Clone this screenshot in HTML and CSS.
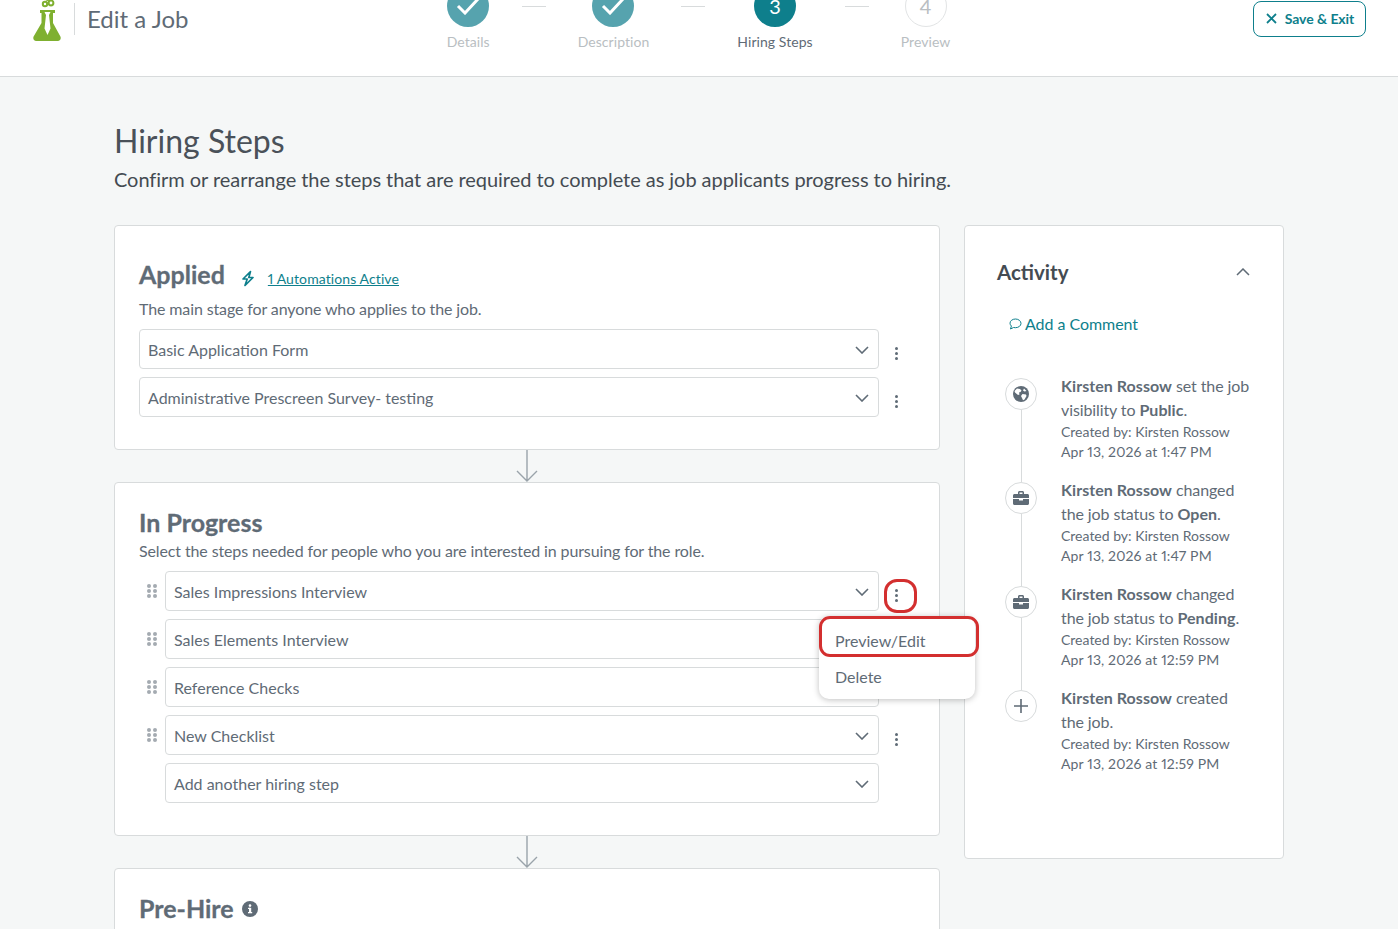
FILE: index.html
```html
<!DOCTYPE html>
<html lang="en">
<head>
<meta charset="UTF-8">
<title>Edit a Job</title>
<link rel="stylesheet" href="styles.css">
</head>
<body>
<div class="page">

<!-- Top bar -->
<header class="topbar">
    <div class="brand">
        <svg class="logo" width="28" height="62" viewBox="0 0 28 62">
            <circle cx="12" cy="24" r="2.2" fill="none" stroke="#7fb030" stroke-width="2"/>
            <circle cx="18" cy="23" r="2.4" fill="none" stroke="#7fb030" stroke-width="2"/>
            <circle cx="15" cy="18" r="2" fill="none" stroke="#7fb030" stroke-width="2"/>
            <path fill="#7fb030" d="M7 30h15v3h-2v10l7.400 13.500c.9 2-.2 4.500-2.600 4.500H3.200C.8 61-.3 58.500.6 56.500L8.500 43V33H7z"/>
            <path fill="#fff" d="M11.500 32h6l-1.500 3 1.500 13.500L14.500 55l-3-6.500L13 35z"/>
        </svg>
        <span class="brand-sep"></span>
        <span class="brand-title">Edit a Job</span>
    </div>
    <nav class="steps">
        <div class="step done">
            <span class="dot"><svg width="24" height="18" viewBox="0 0 24 18"><path d="M2 9l7 7L22 2" fill="none" stroke="#fff" stroke-width="3"/></svg></span>
            <span class="step-label">Details</span>
        </div>
        <span class="step-line"></span>
        <div class="step done">
            <span class="dot"><svg width="24" height="18" viewBox="0 0 24 18"><path d="M2 9l7 7L22 2" fill="none" stroke="#fff" stroke-width="3"/></svg></span>
            <span class="step-label">Description</span>
        </div>
        <span class="step-line"></span>
        <div class="step current">
            <span class="dot">3</span>
            <span class="step-label">Hiring Steps</span>
        </div>
        <span class="step-line"></span>
        <div class="step todo">
            <span class="dot">4</span>
            <span class="step-label">Preview</span>
        </div>
    </nav>
    <div class="topbar-right">
        <button class="save-btn" type="button">
            <svg width="11" height="11" viewBox="0 0 11 11"><path d="M1 1l9 9M10 1l-9 9" stroke="#0e7f8c" stroke-width="1.800" fill="none"/></svg>
            <span>Save &amp; Exit</span>
        </button>
    </div>
</header>

<main class="content">
    <h1>Hiring Steps</h1>
    <p class="lead">Confirm or rearrange the steps that are required to complete as job applicants progress to hiring.</p>

    <div class="columns">
        <div class="stages">

            <!-- Applied -->
            <section class="card card-applied">
                <div class="stage-head">
                    <h2>Applied</h2>
                    <svg class="bolt" width="14" height="17" viewBox="0 0 14 17"><path d="M9.500 1.500L2 9h4.200L4 15.500 12 7.500H7.800z" fill="none" stroke="#0e7f8c" stroke-width="1.700" stroke-linejoin="round"/></svg>
                    <a class="auto-link" href="#">1 Automations Active</a>
                </div>
                <p class="stage-desc">The main stage for anyone who applies to the job.</p>
                <div class="rows">
                    <div class="row">
                        <div class="select"><span>Basic Application Form</span><svg class="chev" width="14" height="8" viewBox="0 0 14 8"><path d="M1 1l6 6 6-6" fill="none" stroke="#5f6b76" stroke-width="1.600"/></svg></div>
                        <button class="kebab" type="button"><i></i><i></i><i></i></button>
                    </div>
                    <div class="row">
                        <div class="select"><span>Administrative Prescreen Survey- testing</span><svg class="chev" width="14" height="8" viewBox="0 0 14 8"><path d="M1 1l6 6 6-6" fill="none" stroke="#5f6b76" stroke-width="1.600"/></svg></div>
                        <button class="kebab" type="button"><i></i><i></i><i></i></button>
                    </div>
                </div>
            </section>

            <div class="arrow"><svg width="22" height="32" viewBox="0 0 22 32"><path d="M11 0v31M1 21l10 10 10-10" fill="none" stroke="#9aa3aa" stroke-width="1.400"/></svg></div>

            <!-- In Progress -->
            <section class="card card-progress">
                <div class="stage-head">
                    <h2>In Progress</h2>
                </div>
                <p class="stage-desc tight">Select the steps needed for people who you are interested in pursuing for the role.</p>
                <div class="rows">
                    <div class="row">
                        <span class="grip"><i></i><i></i><i></i><i></i><i></i><i></i></span>
                        <div class="select"><span>Sales Impressions Interview</span><svg class="chev" width="14" height="8" viewBox="0 0 14 8"><path d="M1 1l6 6 6-6" fill="none" stroke="#5f6b76" stroke-width="1.600"/></svg></div>
                        <button class="kebab open" type="button"><i></i><i></i><i></i></button>
                        <div class="menu">
                            <div class="menu-item on">Preview/Edit</div>
                            <div class="menu-item">Delete</div>
                        </div>
                    </div>
                    <div class="row">
                        <span class="grip"><i></i><i></i><i></i><i></i><i></i><i></i></span>
                        <div class="select"><span>Sales Elements Interview</span><svg class="chev" width="14" height="8" viewBox="0 0 14 8"><path d="M1 1l6 6 6-6" fill="none" stroke="#5f6b76" stroke-width="1.600"/></svg></div>
                        <button class="kebab" type="button"><i></i><i></i><i></i></button>
                    </div>
                    <div class="row">
                        <span class="grip"><i></i><i></i><i></i><i></i><i></i><i></i></span>
                        <div class="select"><span>Reference Checks</span><svg class="chev" width="14" height="8" viewBox="0 0 14 8"><path d="M1 1l6 6 6-6" fill="none" stroke="#5f6b76" stroke-width="1.600"/></svg></div>
                        <button class="kebab" type="button"><i></i><i></i><i></i></button>
                    </div>
                    <div class="row">
                        <span class="grip"><i></i><i></i><i></i><i></i><i></i><i></i></span>
                        <div class="select"><span>New Checklist</span><svg class="chev" width="14" height="8" viewBox="0 0 14 8"><path d="M1 1l6 6 6-6" fill="none" stroke="#5f6b76" stroke-width="1.600"/></svg></div>
                        <button class="kebab" type="button"><i></i><i></i><i></i></button>
                    </div>
                    <div class="row">
                        <span class="grip blank"></span>
                        <div class="select"><span>Add another hiring step</span><svg class="chev" width="14" height="8" viewBox="0 0 14 8"><path d="M1 1l6 6 6-6" fill="none" stroke="#5f6b76" stroke-width="1.600"/></svg></div>
                        <span class="kebab blank"></span>
                    </div>
                </div>
            </section>

            <div class="arrow"><svg width="22" height="32" viewBox="0 0 22 32"><path d="M11 0v31M1 21l10 10 10-10" fill="none" stroke="#9aa3aa" stroke-width="1.400"/></svg></div>

            <!-- Pre-Hire -->
            <section class="card card-prehire">
                <div class="stage-head">
                    <h2>Pre-Hire</h2>
                    <svg class="info" width="16" height="16" viewBox="0 0 16 16"><circle cx="8" cy="8" r="8" fill="#5f6b76"/><rect x="7" y="6.800" width="2.200" height="5" fill="#fff"/><rect x="6" y="11" width="4.200" height="1.300" fill="#fff"/><rect x="6" y="6.800" width="2" height="1.200" fill="#fff"/><circle cx="8" cy="4.600" r="1.300" fill="#fff"/></svg>
                </div>
            </section>
        </div>

        <!-- Activity -->
        <aside class="card activity">
            <div class="activity-head">
                <h3>Activity</h3>
                <svg width="14" height="8" viewBox="0 0 14 8"><path d="M1 7l6-6 6 6" fill="none" stroke="#5f6b76" stroke-width="1.500"/></svg>
            </div>
            <a class="add-comment" href="#">
                <svg width="13" height="12" viewBox="0 0 13 12"><path d="M6.500 1C3.400 1 1 2.900 1 5.200c0 1.100.5 2 1.400 2.800L1.500 11l3-1.500c.6.100 1.300.2 2 .2 3.100 0 5.500-2 5.500-4.300S9.600 1 6.500 1z" fill="none" stroke="#0e7f8c"/></svg>
                <span>Add a Comment</span>
            </a>
            <ul class="timeline">
                <li class="event">
                    <span class="node"><svg width="16" height="16" viewBox="0 0 16 16"><circle cx="8" cy="8" r="8" fill="#5f6b76"/><path fill="#fff" d="M4 2.500l3 .5 1.500 1.500-1 1.500-1.500.5.500 2-1.500.5L2 6.500 1.500 5zM9.500 8l3.500.5.500 1.500-2 3.500-1.500.8L9 12l-1-2zM11 2.500l2.500 2.500-2 .5-1.500-1z"/></svg></span>
                    <div class="event-body">
                        <p class="event-text"><b>Kirsten Rossow</b> set the job visibility to <b>Public</b>.</p>
                        <p class="event-meta">Created by: Kirsten Rossow<br><span class="event-date">Apr 13, 2026 at 1:47 PM</span></p>
                    </div>
                </li>
                <li class="event">
                    <span class="node"><svg width="16" height="14" viewBox="0 0 16 14"><path fill="#5f6b76" d="M5 3V1.500C5 .7 5.700 0 6.500 0h3c.8 0 1.500.7 1.500 1.500V3h3.500c.8 0 1.500.7 1.500 1.500V7H0V4.500C0 3.700.7 3 1.500 3zm1.500 0h3V1.500h-3zM0 8h6v1.500h4V8h6v4.500c0 .8-.7 1.500-1.500 1.500h-13C.7 14 0 13.300 0 12.500z"/></svg></span>
                    <div class="event-body">
                        <p class="event-text"><b>Kirsten Rossow</b> changed the job status to <b>Open</b>.</p>
                        <p class="event-meta">Created by: Kirsten Rossow<br><span class="event-date">Apr 13, 2026 at 1:47 PM</span></p>
                    </div>
                </li>
                <li class="event">
                    <span class="node"><svg width="16" height="14" viewBox="0 0 16 14"><path fill="#5f6b76" d="M5 3V1.500C5 .7 5.700 0 6.500 0h3c.8 0 1.500.7 1.500 1.500V3h3.500c.8 0 1.500.7 1.500 1.500V7H0V4.500C0 3.700.7 3 1.500 3zm1.500 0h3V1.500h-3zM0 8h6v1.500h4V8h6v4.500c0 .8-.7 1.500-1.500 1.500h-13C.7 14 0 13.300 0 12.500z"/></svg></span>
                    <div class="event-body">
                        <p class="event-text"><b>Kirsten Rossow</b> changed the job status to <b>Pending</b>.</p>
                        <p class="event-meta">Created by: Kirsten Rossow<br><span class="event-date">Apr 13, 2026 at 12:59 PM</span></p>
                    </div>
                </li>
                <li class="event last">
                    <span class="node"><svg width="14" height="14" viewBox="0 0 14 14"><path d="M7 0v14M0 7h14" stroke="#5f6b76" stroke-width="1.600" fill="none"/></svg></span>
                    <div class="event-body">
                        <p class="event-text"><b>Kirsten Rossow</b> created the job.</p>
                        <p class="event-meta">Created by: Kirsten Rossow<br><span class="event-date">Apr 13, 2026 at 12:59 PM</span></p>
                    </div>
                </li>
            </ul>
        </aside>
    </div>
</main>
</div>
</body>
</html>
```

FILE: styles.css
```css
:root{
    --teal:#0e7f8c;
    --text:#5f6b76;
    --line:#d8dbdc;
}
*,*::before,*::after{box-sizing:border-box;}
html,body{height:929px;overflow:hidden;}
body{
    margin:0;
    font-family:Lato,"Open Sans",sans-serif;
    font-variant-numeric:proportional-nums;
    color:var(--text);
    background:#f5f7f7;
}
/* the screenshot is scrolled down a little */
.page{margin-top:-20px;}

.topbar{
    height:97px;
    background:#fff;
    border-bottom:1px solid var(--line);
    display:grid;
    grid-template-columns:1fr auto 1fr;
    padding:0 34px 0 33px;
}
.brand{display:flex;align-items:flex-start;}
.logo{display:block;flex:none;}
.brand-sep{width:1px;height:32px;margin:23px 12px 0 13px;background:var(--line);}
.brand-title{font-size:24px;line-height:32px;margin-top:23px;}

.steps{display:flex;align-items:flex-start;gap:32px;padding-top:5px;}
.step{display:flex;flex-direction:column;align-items:center;}
.dot{
    width:42px;
    height:42px;
    border-radius:50%;
    display:flex;
    align-items:center;
    justify-content:center;
    font-size:20px;
    color:#fff;
}
.step-label{font-size:14px;line-height:20px;margin-top:5px;letter-spacing:.06px;color:#b9bec2;}
.step.done .dot{background:#56a3ae;}
.step.current .dot{background:var(--teal);}
.step.current .step-label{color:var(--text);}
.step.todo .dot{background:#fff;border:1px solid #e2e4e5;color:#b9bec2;}
.step-line{width:24px;height:1px;margin-top:21px;background:#d8dbdc;}

.topbar-right{display:flex;justify-content:flex-end;align-items:flex-start;padding-top:21px;margin-right:-2px;}
.save-btn{
    height:36px;
    width:113px;
    padding:0 0 2px 1px;
    display:flex;
    align-items:center;
    justify-content:center;
    gap:8px;
    font-family:inherit;
    font-size:14px;
    font-weight:bold;
    letter-spacing:-.06px;
    color:var(--teal);
    background:#fff;
    border:1px solid var(--teal);
    border-radius:8px;
}

.content{padding:44px 114px 0;}
h1{margin:0;font-size:32px;line-height:40px;font-weight:normal;color:#4a5159;}
.lead{margin:4px 0 0;font-size:20px;line-height:28px;letter-spacing:-.05px;color:#444b52;}
.columns{display:flex;align-items:flex-start;gap:24px;margin-top:32px;}
.stages{width:826px;flex:none;}

.card{background:#fff;border:1px solid var(--line);border-radius:4px;padding:0 24px;}
.card-applied{height:225px;padding-top:33px;}
.card-progress{height:354px;padding-top:24px;}
.card-prehire{height:120px;padding-top:24px;}
.stage-head{display:flex;align-items:center;height:32px;}
h2{margin:0;padding-bottom:2px;font-size:25px;line-height:32px;font-weight:bold;-webkit-text-stroke:.3px;}
.bolt{margin:6px 0 0 16px;}
.auto-link{margin:7px 0 0 13px;font-size:14px;letter-spacing:.1px;color:var(--teal);}
.info{margin:0 0 0 8px;}
.stage-desc{margin:6px 0 0;font-size:16px;line-height:24px;letter-spacing:-.12px;}
.stage-desc.tight{margin-top:0;}
.rows{display:flex;flex-direction:column;gap:8px;margin-top:8px;}
.row{display:flex;position:relative;}

.select{
    flex:1;
    height:40px;
    display:flex;
    align-items:center;
    justify-content:space-between;
    padding:2px 9px 0 8px;
    font-size:16px;
    background:#fff;
    border:1px solid var(--line);
    border-radius:4px;
}
.select span{margin-top:-2px;}
.grip{
    flex:none;
    width:26px;
    display:grid;
    grid-template-columns:4px 4px;
    grid-auto-rows:4px;
    gap:1px 2px;
    align-content:start;
    padding:13px 0 0 8px;
}
.grip i{width:4px;height:4px;border-radius:50%;background:#a4abb1;}
.kebab{
    flex:none;
    width:36px;
    height:40px;
    padding:8px 1px 0 0;
    display:flex;
    flex-direction:column;
    align-items:center;
    justify-content:center;
    gap:2px;
    background:none;
    border:none;
}
.kebab i{width:3px;height:3px;border-radius:50%;background:var(--text);}
.kebab.open::after{
    content:"";
    position:absolute;
    right:-2px;
    top:8px;
    width:33px;
    height:34px;
    border:3.500px solid #d32f2f;
    border-radius:13px;
}

.menu{
    position:absolute;
    left:680px;
    top:45px;
    width:156px;
    height:83px;
    background:#fff;
    border-radius:10px;
    box-shadow:0 1px 6px rgba(0,0,0,.25);
    z-index:2;
}
.menu-item{height:36px;padding:0 16px;font-size:16px;line-height:36px;}
.menu-item.on{position:relative;height:41px;line-height:50px;margin-bottom:2px;}
.menu-item.on::after{
    content:"";
    position:absolute;
    left:0;
    top:0;
    width:160px;
    height:41px;
    border:3px solid #d32f2f;
    border-radius:11px;
}

.arrow{height:32px;padding-left:402px;}
.arrow svg{display:block;}

.activity{width:320px;height:634px;padding:0 32px;flex:none;}
.activity-head{display:flex;justify-content:space-between;align-items:center;height:32px;margin-top:30px;padding-right:1px;}
.activity-head svg{margin:-1px 0 0 0;}
h3{margin:0;font-size:20.500px;line-height:32px;font-weight:bold;color:#444b52;}
.add-comment{
    display:flex;
    align-items:center;
    gap:3px;
    margin:24px 0 0 12px;
    font-size:16px;
    line-height:24px;
    letter-spacing:-.05px;
    color:var(--teal);
    text-decoration:none;
}
.timeline{list-style:none;margin:38px 0 0;padding:0;}
.event{display:flex;gap:24px;height:104px;position:relative;margin-left:8px;}
.event::before{
    content:"";
    position:absolute;
    left:15.500px;
    top:36px;
    width:1px;
    height:72px;
    background:var(--line);
}
.event.last::before{display:none;}
.node{
    flex:none;
    width:32px;
    height:32px;
    margin-top:4px;
    border:1px solid var(--line);
    border-radius:50%;
    background:#fff;
    display:flex;
    align-items:center;
    justify-content:center;
}
.event-body{flex:1;min-width:0;}
.event-text{margin:0;font-size:16px;line-height:24px;letter-spacing:-.1px;}
.event-text b{letter-spacing:.05px;}
.event-meta{margin:0;font-size:14px;line-height:20px;}
.event-date{letter-spacing:.13px;}
```
